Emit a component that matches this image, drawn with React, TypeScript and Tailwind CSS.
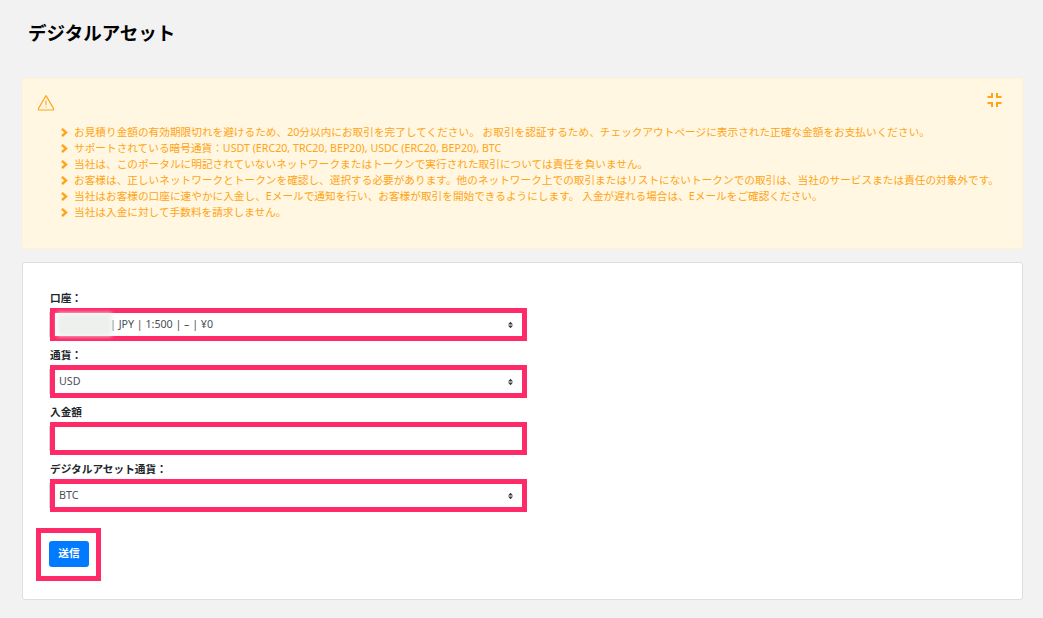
import React from "react";

const font = { fontFamily: '"Noto Sans", "Noto Sans CJK JP", sans-serif' };

const notes = [
  "お見積り金額の有効期限切れを避けるため、20分以内にお取引を完了してください。 お取引を認証するため、チェックアウトページに表示された正確な金額をお支払いください。",
  "サポートされている暗号通貨：USDT (ERC20, TRC20, BEP20), USDC (ERC20, BEP20), BTC",
  "当社は、このポータルに明記されていないネットワークまたはトークンで実行された取引については責任を負いません。",
  "お客様は、正しいネットワークとトークンを確認し、選択する必要があります。他のネットワーク上での取引またはリストにないトークンでの取引は、当社のサービスまたは責任の対象外です。",
  "当社はお客様の口座に速やかに入金し、Eメールで通知を行い、お客様が取引を開始できるようにします。 入金が遅れる場合は、Eメールをご確認ください。",
  "当社は入金に対して手数料を請求しません。",
];

function Chevron() {
  return (
    <svg width="7" height="9" viewBox="0 0 7 9" className="shrink-0 ml-px" fill="none">
      <path d="M1 0.8 L5 4.5 L1 8.2" stroke="#ffa31a" strokeWidth="2.4" />
    </svg>
  );
}

function Updown() {
  return (
    <svg width="5" height="8" viewBox="0 0 6 8" className="ml-auto mr-[9px]">
      <path d="M3 0 L6 3.3 H0 Z M3 8 L0 4.7 H6 Z" fill="#343a40" />
    </svg>
  );
}

function Field({ label, children }: { label: string; children?: React.ReactNode }) {
  return (
    <div className="flex flex-col">
      <div className="h-6 flex items-center pt-[4px] text-[10.66px] font-semibold text-[#212529] leading-none">{label}</div>
      <div className="relative h-[33px] w-[477px] border-[5px] border-[#ff2a68] bg-white flex items-center pl-[4px] text-[10.66px] text-[#495057]">
        <div className="absolute left-[-6px] top-[-1px] bottom-[-1px] w-px bg-[#ced4da]" />
        {children}
      </div>
    </div>
  );
}

export default function App() {
  return (
    <div style={font} className="min-h-[618px] bg-[#f2f2f2] px-[22px] pt-[21px] pb-[18px] w-[1043px] overflow-hidden">
      <h1 className="ml-[6px] h-[23px] text-[18.5px] leading-[23px] font-bold text-black">デジタルアセット</h1>

      <div className="mt-[34px] h-[171px] w-[1001px] rounded-[3px] border border-[#fff3cf] bg-[#fff7e2] text-[#ffa414] pl-[14px] pr-[20px] pt-[14px]">
        <div className="flex h-[20px] items-start justify-between">
          <svg width="18" height="18" viewBox="0 0 18 18" fill="none" className="mt-[1px]" stroke="#ffa31a" strokeWidth="1.1">
            <path d="M9 1.6 L16.6 14.6 Q17 16 15.6 16 H2.4 Q1 16 1.4 14.6 Z" strokeLinejoin="round" />
            <path d="M9 6.5 V11" />
            <path d="M9 12.4 V13.4" />
          </svg>
          <svg width="15" height="14" viewBox="0 0 15 14" fill="none" stroke="#ffa31a" strokeWidth="2">
            <path d="M5 0 V4 H0.5" />
            <path d="M10 0 V4 H14.5" />
            <path d="M5 14 V10 H0.5" />
            <path d="M10 14 V10 H14.5" />
          </svg>
        </div>
        <ul className="mt-[11px] ml-[23px] flex flex-col">
          {notes.map((n) => (
            <li key={n} className="flex h-[16.1px] items-center gap-[6px] text-[10.66px] leading-none whitespace-nowrap">
              <Chevron />
              <span>{n}</span>
            </li>
          ))}
        </ul>
      </div>

      <div className="mt-[13px] h-[338px] w-[1001px] rounded-[3px] border border-[#dedede] bg-white pl-[27px] pt-[21px]">
        <div className="flex flex-col">
          <Field label="口座：">
            <div className="h-[23px] w-[55px] bg-[#eef0ee] blur-[2px] -ml-[2px]" />
            <span className="ml-[-2px]">| JPY | 1:500 | – | ¥0</span>
            <Updown />
          </Field>
          <Field label="通貨：">
            <span>USD</span>
            <Updown />
          </Field>
          <Field label="入金額" />
          <Field label="デジタルアセット通貨：">
            <span>BTC</span>
            <Updown />
          </Field>
        </div>
        <div className="mt-4 -ml-[14px] h-[53px] w-[65px] border-[5px] border-[#ff2a68] bg-white pl-[8px] pt-[8px]">
          <button className="block h-[26px] w-10 rounded-[3px] bg-[#007bff] text-[10.66px] font-semibold text-white">送信</button>
        </div>
      </div>
    </div>
  );
}
